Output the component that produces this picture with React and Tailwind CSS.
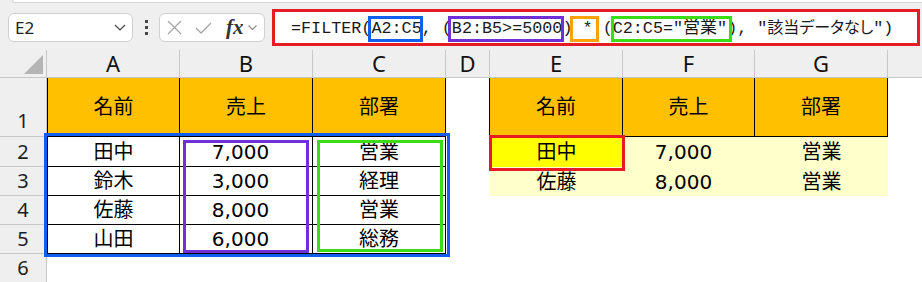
import React from 'react'

// Excel-like sheet with a FILTER formula and coloured annotation boxes

const GRID_FONT = "font-['DejaVu_Sans','Noto_Sans_CJK_JP',sans-serif]"
const HEAD = 'bg-[#efefef] border-[#c8c8c8]'
const GOLD = 'bg-[#ffc000]'
const PALE = 'bg-[#ffffcc]'
const T = 'border-r border-b border-black'

function Mark({ box, children }) {
  return (
    <span className="relative">
      {children}
      <span className={'absolute top-1/2 -translate-y-1/2 h-[26px] border-[3px] ' + box} />
    </span>
  )
}

function Cell({ w, className = '', children }) {
  return (
    <div className={`${w} shrink-0 h-full box-border flex items-center justify-center ${className}`}>
      {children}
    </div>
  )
}

function Row({ n, h, head = 'items-center', cells }) {
  return (
    <div className={`${h} flex`}>
      <div className={`w-[47px] shrink-0 h-full box-border border-r border-b ${HEAD} flex justify-center ${head} font-['Noto_Sans',sans-serif] text-[20px] text-[#1e1e1e]`}>
        {n}
      </div>
      {cells}
      <div className="flex-1" />
    </div>
  )
}

const W = ['w-[133px]', 'w-[133px]', 'w-[133px]', 'w-[44px]', 'w-[133px]', 'w-[132px]', 'w-[133px]']

function dataRow(n, h, a, b, c, e) {
  return (
    <Row
      key={n}
      n={n}
      h={h}
      cells={[
        <Cell key="a" w={W[0]} className={T + ' border-l'}>{a}</Cell>,
        <Cell key="b" w={W[1]} className={T + ' pr-[11px]'}>{b}</Cell>,
        <Cell key="c" w={W[2]} className={T}>{c}</Cell>,
        <Cell key="d" w={W[3]} />,
        <Cell key="e" w={W[4]} className={e ? (n === 2 ? 'bg-[#ffff00]' : PALE) : ''}>{e && e[0]}</Cell>,
        <Cell key="f" w={W[5]} className={(e ? PALE : '') + ' pr-[11px]'}>{e && e[1]}</Cell>,
        <Cell key="g" w={W[6]} className={e ? PALE : ''}>{e && e[2]}</Cell>,
      ]}
    />
  )
}

export default function App() {
  return (
    <div className="w-[922px] h-[282px] overflow-hidden bg-white">
      {/* toolbar */}
      <div className="h-[50px] bg-[#efefef] flex flex-col">
        <div className="ml-[12px] h-[3px] bg-white border-b border-l border-[#d4d4d4] rounded-bl-[6px]" />
        <div className="mt-[6px] h-[37px] flex items-center">
          <div className="ml-[8px] w-[125px] h-[29px] box-border bg-white border border-[#d0d0d0] rounded-[6px] flex items-center justify-between pl-[6px] pr-[6px]">
            <span className="font-['Noto_Sans',sans-serif] text-[17px] text-[#222]">E2</span>
            <svg width="12" height="7" viewBox="0 0 12 7" fill="none" stroke="#444" strokeWidth="1.2">
              <polyline points="1,1 6,6 11,1" />
            </svg>
          </div>
          <div className="w-[26px] flex flex-col items-center gap-[3px]">
            <div className="w-[3px] h-[3px] bg-[#444]" />
            <div className="w-[3px] h-[3px] bg-[#444]" />
            <div className="w-[3px] h-[3px] bg-[#444]" />
          </div>
          <div className="w-[106px] h-[29px] box-border bg-white border border-[#d0d0d0] rounded-[6px] flex items-center pl-[7px]">
            <svg width="15" height="15" viewBox="0 0 15 15" stroke="#a6a6a6" strokeWidth="1.3">
              <line x1="1" y1="1" x2="14" y2="14" />
              <line x1="14" y1="1" x2="1" y2="14" />
            </svg>
            <svg className="ml-[13px]" width="17" height="12" viewBox="0 0 17 12" fill="none" stroke="#a6a6a6" strokeWidth="1.3">
              <polyline points="1,6 6,11 16,1" />
            </svg>
            <span className="ml-[14px] font-['Liberation_Serif',serif] italic font-bold text-[21px] leading-none text-[#333]">fx</span>
            <svg className="ml-[4px]" width="9" height="5" viewBox="0 0 9 5" fill="none" stroke="#8a8a8a" strokeWidth="1.1">
              <polyline points="0.5,0.5 4.5,4.5 8.5,0.5" />
            </svg>
          </div>
          <div className="ml-[7px] w-[648px] h-[37px] box-border border-[3px] border-[#e51c23] bg-white flex items-center pl-[16px]">
            <div className="font-['Liberation_Mono','Noto_Sans_CJK_JP',monospace] text-[16.75px] leading-none text-[#1a1a1a] whitespace-pre">
              {'=FILTER('}
              <Mark box="-left-[3px] -right-[1px] border-[#115ef0]">A2:C5</Mark>
              {', ('}
              <Mark box="-left-[4px] -right-[2px] border-[#7030d8]">{'B2:B5>=5000'}</Mark>
              {') '}
              <Mark box="-left-[13px] -right-[6px] border-[#ffa200]">*</Mark>
              {' ('}
              <Mark box="-left-[2px] -right-[5px] border-[#3cdc14]">
                {'C2:C5="'}
                <span className="font-['Noto_Sans_CJK_JP',sans-serif] text-[17px]">営業</span>
                {'"'}
              </Mark>
              {'), "'}
              <span className="font-['Noto_Sans_CJK_JP',sans-serif] text-[16px] [font-feature-settings:'palt']">該当データなし</span>
              {'")'}
            </div>
          </div>
        </div>
      </div>

      {/* sheet */}
      <div className={`relative ${GRID_FONT} text-[20px] text-black`}>
        <div className={`h-[28px] flex border-b ${HEAD} font-['Noto_Sans',sans-serif] text-[22px] text-[#111]`}>
          <div className={`w-[47px] shrink-0 h-full box-border border-r ${HEAD} flex items-end justify-end pr-[3px] pb-[3px]`}>
            <svg width="19" height="19" viewBox="0 0 19 19">
              <polygon points="19,0 19,19 0,19" fill="#b5b5b5" />
            </svg>
          </div>
          {['A', 'B', 'C', 'D', 'E', 'F', 'G'].map((l, i) => (
            <div key={l} className={`${W[i]} shrink-0 h-full box-border border-r ${HEAD} flex items-center justify-center`}>
              {l}
            </div>
          ))}
          <div className="flex-1" />
        </div>

        <Row
          n={1}
          h="h-[59px]"
          head="items-end"
          cells={[
            <Cell key="a" w={W[0]} className={`${GOLD} ${T} border-l`}>名前</Cell>,
            <Cell key="b" w={W[1]} className={`${GOLD} ${T}`}>売上</Cell>,
            <Cell key="c" w={W[2]} className={`${GOLD} ${T}`}>部署</Cell>,
            <Cell key="d" w={W[3]} className="border-r border-black" />,
            <Cell key="e" w={W[4]} className={`${GOLD} ${T}`}>名前</Cell>,
            <Cell key="f" w={W[5]} className={`${GOLD} ${T}`}>売上</Cell>,
            <Cell key="g" w={W[6]} className={`${GOLD} ${T}`}>部署</Cell>,
          ]}
        />
        {dataRow(2, 'h-[30px]', '田中', '7,000', '営業', ['田中', '7,000', '営業'])}
        {dataRow(3, 'h-[29px]', '鈴木', '3,000', '経理', ['佐藤', '8,000', '営業'])}
        {dataRow(4, 'h-[29px]', '佐藤', '8,000', '営業')}
        {dataRow(5, 'h-[29px]', '山田', '6,000', '総務')}
        <Row n={6} h="h-[29px]" cells={[]} />

        {/* annotation boxes */}
        <div className="absolute left-[44px] top-[83px] w-[406px] h-[124px] border-[3px] border-[#115ef0]" />
        <div className="absolute left-[183px] top-[90px] w-[126px] h-[113px] border-[3px] border-[#7030d8]" />
        <div className="absolute left-[317px] top-[90px] w-[126px] h-[112px] border-[3px] border-[#3cdc14]" />
        <div className="absolute left-[489px] top-[85px] w-[136px] h-[36px] border-[3px] border-[#e51c23]" />
      </div>
    </div>
  )
}
